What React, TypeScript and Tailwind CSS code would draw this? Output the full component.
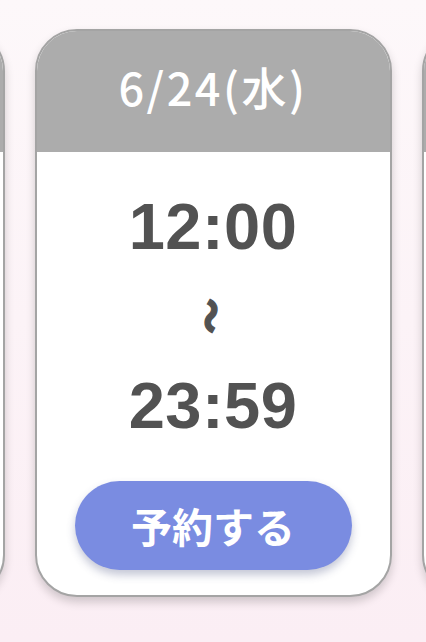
import React from "react";

function Card({ date, start, end }: { date: string; start: string; end: string }) {
  return (
    <div className="shrink-0 w-[357px] h-[568px] flex flex-col rounded-[42px] border-2 border-[#a4a4a4] bg-white overflow-hidden shadow-[0_5px_10px_rgba(0,0,0,0.18)]">
      <div className="h-[121px] shrink-0 bg-[#acacac] flex items-center justify-center pb-[10px]">
        <span className="text-white text-[45px] leading-none font-medium tracking-[2.5px] font-['Noto_Sans_CJK_JP','Liberation_Sans',sans-serif]">
          {date}
        </span>
      </div>
      <div className="flex-1 flex flex-col items-center text-[#525252]">
        <div className="mt-[42px] h-[65px] text-[65px] leading-none font-bold tracking-[0.5px] font-['Liberation_Sans','Noto_Sans_CJK_JP',sans-serif]">
          {start}
        </div>
        <div className="h-[114px] flex items-center justify-center">
          <span className="inline-block rotate-90 text-[36px] font-black leading-none [-webkit-text-stroke:1.2px_#525252] font-['Noto_Sans_CJK_JP',sans-serif]">
            〜
          </span>
        </div>
        <div className="h-[65px] text-[65px] leading-none font-bold tracking-[0.5px] font-['Liberation_Sans','Noto_Sans_CJK_JP',sans-serif]">
          {end}
        </div>
        <button className="mt-[43px] w-[277px] h-[89px] rounded-full bg-[#7a8ce1] text-white text-[41px] font-bold flex items-center justify-center shadow-[0_5px_9px_rgba(60,70,120,0.3)] font-['Noto_Sans_CJK_JP','Liberation_Sans',sans-serif]">
          予約する
        </button>
      </div>
    </div>
  );
}

export default function App() {
  return (
    <div className="w-[426px] h-[642px] overflow-hidden bg-gradient-to-b from-[#fdf8fa] via-[#fcf3f7] to-[#fbeef4] flex justify-center pt-[29px] gap-[30px]">
      <Card date="6/23(火)" start="12:00" end="23:59" />
      <Card date="6/24(水)" start="12:00" end="23:59" />
      <Card date="6/25(木)" start="12:00" end="23:59" />
    </div>
  );
}
